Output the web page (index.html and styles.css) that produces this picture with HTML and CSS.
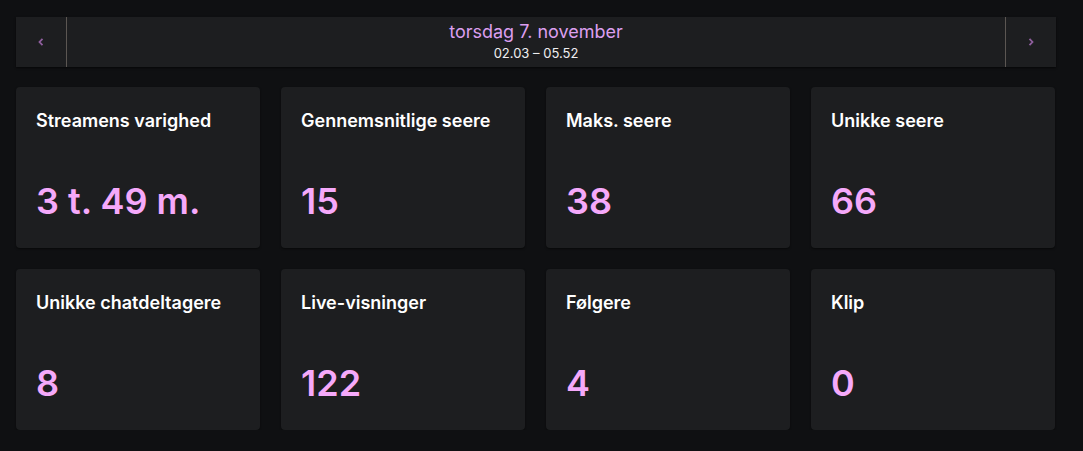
FILE: index.html
```html
<!DOCTYPE html>
<html lang="da">
<head>
<meta charset="utf-8">
<link rel="stylesheet" href="styles.css">
</head>
<body>
<div class="page">
  <div class="datebar">
    <button class="nav nav-prev" aria-label="Forrige">
      <svg width="6" height="8" viewBox="0 0 6 8"><path d="M4.5 0.8 L1.5 4 L4.5 7.2" fill="none" stroke="#8f5f9e" stroke-width="1.8"/></svg>
    </button>
    <div class="date">
      <div class="date-title">torsdag 7. november</div>
      <div class="date-sub">02.03 – 05.52</div>
    </div>
    <button class="nav nav-next" aria-label="Næste">
      <svg width="6" height="8" viewBox="0 0 6 8"><path d="M1.5 0.8 L4.5 4 L1.5 7.2" fill="none" stroke="#8f5f9e" stroke-width="1.8"/></svg>
    </button>
  </div>
  <div class="grid">
    <div class="card"><div class="label">Streamens varighed</div><div class="value">3 t. 49 m.</div></div>
    <div class="card"><div class="label">Gennemsnitlige seere</div><div class="value">15</div></div>
    <div class="card"><div class="label">Maks. seere</div><div class="value">38</div></div>
    <div class="card"><div class="label">Unikke seere</div><div class="value">66</div></div>
    <div class="card"><div class="label">Unikke chatdeltagere</div><div class="value">8</div></div>
    <div class="card"><div class="label">Live-visninger</div><div class="value">122</div></div>
    <div class="card"><div class="label">Følgere</div><div class="value">4</div></div>
    <div class="card"><div class="label">Klip</div><div class="value">0</div></div>
  </div>
</div>
</body>
</html>
```
FILE: styles.css
```css
html, body {
  margin: 0;
  padding: 0;
  background: #0f1012;
  font-family: Inter, "Noto Sans", sans-serif;
  color: #efeff1;
}
.page {
  padding: 17px 27px 0 16px;
}
.datebar {
  display: flex;
  height: 50px;
  background: #1d1e20;
  box-shadow: 0 1px 2px rgba(0,0,0,0.6);
}
.nav {
  width: 51px;
  flex: none;
  background: transparent;
  border: 0;
  padding: 0;
  display: flex;
  align-items: center;
  justify-content: center;
  cursor: pointer;
}
.nav-prev { border-right: 1px solid #5b5652; }
.nav-next { border-left: 1px solid #5b5652; }
.date {
  flex: 1;
  display: flex;
  flex-direction: column;
  align-items: center;
  padding-top: 4px;
}
.date-title {
  font-size: 18px;
  line-height: 22px;
  color: #dc9fef;
}
.date-sub {
  margin-top: 3px;
  font-size: 13px;
  line-height: 15px;
  color: #efeff1;
}
.grid {
  margin-top: 20px;
  display: grid;
  grid-template-columns: repeat(4, 244px);
  column-gap: 21px;
  row-gap: 21px;
}
.card {
  height: 161px;
  box-sizing: border-box;
  background: #1d1e20;
  border-radius: 4px;
  padding: 23px 20px 0;
  box-shadow: 0 1px 2px rgba(0,0,0,0.5);
}
.label {
  font-size: 18px;
  line-height: 22px;
  font-weight: 600;
  color: #ffffff;
}
.value {
  margin-top: 47px;
  font-size: 36px;
  line-height: 44px;
  font-weight: 600;
  color: #f5a9fa;
}
```
